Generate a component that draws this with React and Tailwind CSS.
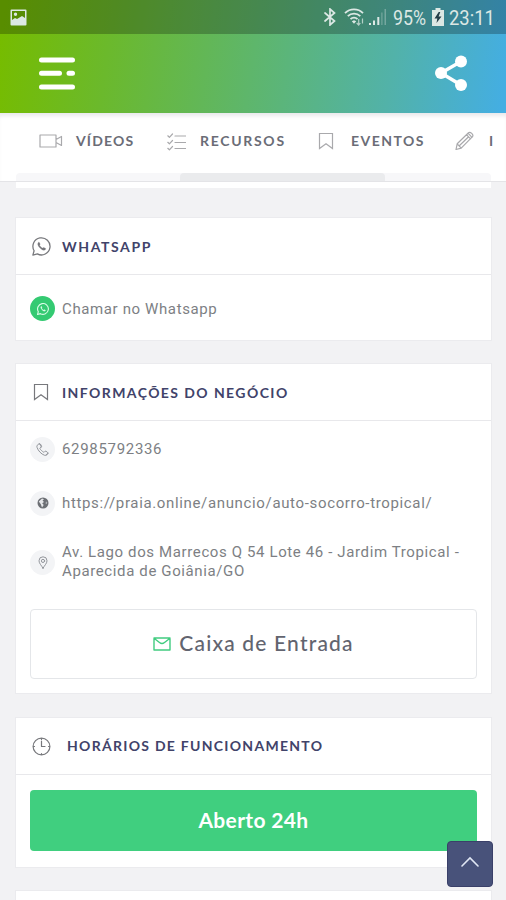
import React from "react";

const head = "font-[Lato,sans-serif] font-bold text-[14px] leading-5 whitespace-nowrap text-[#41436a]";
const tab = "font-[Lato,sans-serif] font-bold text-[14px] leading-5 -mt-[2px] whitespace-nowrap text-[#6b6d77] shrink-0";
const body = "font-[Roboto,sans-serif] text-[15px] whitespace-nowrap text-[#7d7f84]";

function Icon({ w, h, className = "", sw = 1.2, children }) {
  return (
    <svg width={w} height={h} viewBox={`0 0 ${w} ${h}`} className={`shrink-0 ${className}`} fill="none" stroke="currentColor" strokeWidth={sw} strokeLinejoin="round" strokeLinecap="round">
      {children}
    </svg>
  );
}

function WhatsApp({ size, sw, className }) {
  return (
    <svg width={size} height={size} viewBox="0 0 18 18" className={`shrink-0 ${className}`} fill="none" stroke="currentColor" strokeWidth={sw} strokeLinejoin="round" strokeLinecap="round">
      <path d="M.8 17.2 2 13A8.1 8.1 0 1 1 5.1 16Z" />
      <path d="M6.1 5.1C4.8 6 5.4 8 7.3 10.1c2.2 2.3 4.6 3.2 5.5 1.7.4-.7.2-1-.5-1.3l-1.2-.6c-.5-.2-.7.7-1.2.6C8.800 10.100 7.600 8.900 7.200 7.900c-.1-.4.7-.6.500-1.200l-.6-1.300c-.2-.4-.6-.5-1-.3Z" fill="currentColor" strokeWidth=".2" />
    </svg>
  );
}

function Bookmark({ className }) {
  return (
    <Icon w={16} h={18} className={className}>
      <path d="M1.500 1.500h13v15L8 11.800 1.500 16.500Z" strokeLinejoin="miter" />
    </Icon>
  );
}

function Round({ children }) {
  return <div className="flex size-[25px] shrink-0 items-center justify-center rounded-full bg-[#f3f4f6] text-[#93969c]">{children}</div>;
}

function Card({ className = "", title, children }) {
  return (
    <section className={`mx-[15px] w-[477px] shrink-0 border border-[#ebebee] bg-white ${className}`}>
      <div className="flex h-[57px] items-center border-b border-[#e8e8eb] pl-[15px]">{title}</div>
      {children}
    </section>
  );
}

function StatusBar() {
  return (
    <div className="flex h-[34px] items-center bg-black/25 text-[#dce8e4]">
      <svg width="17" height="17" viewBox="0 0 17 17" className="ml-[10px] shrink-0">
        <path fillRule="evenodd" fill="currentColor" d="M1.500.5h14a1 1 0 0 1 1 1v14a1 1 0 0 1-1 1h-14a1 1 0 0 1-1-1v-14a1 1 0 0 1 1-1ZM2 2v9l3-2 2 1 5-3 3 2V2ZM5.500 3.500a1.700 1.700 0 1 1 0 3.400 1.700 1.700 0 0 1 0-3.400Z" />
      </svg>
      <Icon w={12} h={18} sw={1.700} className="ml-[297px]">
        <path d="m1 5 9.500 8L6 17V1l4.500 4L1 13" strokeLinejoin="miter" />
      </Icon>
      <svg width="22" height="18" viewBox="0 0 22 18" className="ml-[8px] shrink-0" fill="none" stroke="currentColor" strokeWidth="1.800">
        <path d="M1 5.200c5-5 13-5 18 0M3.800 8.200c3.500-3.400 9-3.400 12.500 0M6.500 11.200c2-2 5-2 7 0" />
        <path d="m7.800 13.300 2.200-1 2.200 1L10 15.700Z" fill="currentColor" stroke="none" />
        <path d="M14.700 17v-6M12.700 15l2 2 1.600-2M18.500 10.500v5" strokeWidth="1.200" opacity=".75" />
      </svg>
      <svg width="19" height="18" viewBox="0 0 19 18" className="ml-[2px] shrink-0" fill="currentColor">
        <path d="M1 15h2v2H1ZM5 12.500h2V17H5ZM9.300 9h2v8h-2Z" />
        <path d="M13.300 4.500h1.200V17h-1.200ZM16.500 1H18v16h-1.500Z" opacity=".35" />
      </svg>
      <span className="ml-[6px] mt-[2px] inline-block w-[34px] origin-left scale-x-[.89] whitespace-nowrap font-[Roboto,sans-serif] text-[20px] leading-6">95%</span>
      <svg width="12" height="18" viewBox="0 0 12 18" className="ml-[5px] shrink-0">
        <path d="M3.500 0h5v2H12v16H0V2h3.500Z" fill="currentColor" />
        <path d="M6.700 4 2.500 10.500h2.800L4.500 15l5-6.500H6.600L8.300 4Z" fill="#243e48" />
      </svg>
      <span className="ml-[5px] mt-[2px] inline-block w-[46px] origin-left scale-x-[.92] whitespace-nowrap font-[Roboto,sans-serif] text-[20px] leading-6">23:11</span>
    </div>
  );
}

export default function App() {
  return (
    <div className="relative flex h-[900px] w-[506px] flex-col overflow-hidden bg-[#f2f2f4]">
      <header className="h-[113px] shrink-0 bg-[linear-gradient(98deg,#76bc00_1%,#6bb92c_22%,#5eb66b_50%,#52b2a9_77%,#44aee2_99%)]">
        <StatusBar />
        <div className="flex h-[79px] items-center justify-between pl-[38px] pr-[38px] text-white">
          <Icon w={38} h={36} sw={5} className="-mt-px">
            <path d="M3.500 5h31M3.500 18.300h18M31 18.300h3.500M3.500 32h31" />
          </Icon>
          <svg width="34" height="36" viewBox="0 0 34 36" fill="currentColor" className="-mt-[2px]">
            <path d="M27 6.500 7 18l20 12" fill="none" stroke="currentColor" strokeWidth="3.500" />
            <circle cx="27" cy="6.500" r="6" />
            <circle cx="7" cy="18" r="6" />
            <circle cx="27" cy="30" r="6" />
          </svg>
        </div>
      </header>

      <nav className="flex h-[69px] shrink-0 flex-col border-b border-[#e4e4e7] bg-white shadow-[inset_0_5px_4px_-2px_#e9e9eb]">
        <div className="flex h-[58px] w-[493px] items-center overflow-hidden pl-[39px] text-[#a9a9ac]">
          <Icon w={24} h={14} className="-mt-[3px]">
            <path d="M1 1h16v12H1ZM17 5.500l5.500-3v9L17 8.500" />
          </Icon>
          <span className={`${tab} ml-[13px] w-[91px] tracking-[1.150px]`}>VÍDEOS</span>
          <Icon w={19} h={18} className="-mt-px">
            <path d="M8 3h10.500M8 9.500h10.500M8 15.500h10.500M.8 2.800l1.600 1.500L5.500 1M.8 9.300l1.600 1.500 3.100-3.300M.8 15.300l1.600 1.500 3.100-3.300" />
          </Icon>
          <span className={`${tab} ml-[14px] w-[118px] tracking-[1.700px]`}>RECURSOS</span>
          <Bookmark className="-mt-[3px]" />
          <span className={`${tab} ml-[17px] w-[104px] tracking-[1.450px]`}>EVENTOS</span>
          <Icon w={19} h={20} className="-mt-[3px]">
            <path d="m1 18.500 1.200-5.700L13.500 1.700c1.700-1.500 5.500 2 4 4L6.200 17.200ZM2.200 12.800l4 4.400M11.500 3.700l4 4.200M13 2.200l4 4.200M4.300 14.800 13.600 5.800" />
          </Icon>
          <span className={`${tab} ml-[15px]`}>I</span>
        </div>
        <div className="mx-4 mt-auto flex h-2 w-[475px] rounded-t bg-[#f7f7f9]">
          <div className="ml-[164px] h-full w-[205px] rounded-t bg-[#eaebed]" />
        </div>
      </nav>
      <div className="mx-4 h-[6px] w-[475px] shrink-0 bg-white" />

      <Card
        className="mt-[29px] h-[124px]"
        title={
          <>
            <WhatsApp size={19} sw={1.200} className="ml-px mt-px text-[#77787c]" />
            <h2 className={`${head} ml-[11px] mt-[2px] tracking-[1.600px]`}>WHATSAPP</h2>
          </>
        }
      >
        <div className="flex h-[67px] items-center pl-[14px]">
          <div className="flex size-[25px] items-center justify-center rounded-full bg-[#34ca72]">
            <WhatsApp size={12} sw={1.700} className="text-[#d9fbe6]" />
          </div>
          <span className={`${body} ml-[7px] mt-px tracking-[.62px]`}>Chamar no Whatsapp</span>
        </div>
      </Card>

      <Card
        className="mt-[22px] h-[331px]"
        title={
          <>
            <Bookmark className="ml-[2px] text-[#77787c]" />
            <h2 className={`${head} ml-[13px] mt-px tracking-[1.420px]`}>INFORMAÇÕES DO NEGÓCIO</h2>
          </>
        }
      >
        <div className="flex flex-col pl-[14px]">
          <div className="flex h-[57px] items-center">
            <Round>
              <Icon w={13} h={13} sw={1}>
                <path d="M3.300.8C1.300 1.500.5 2.800 1 4.300c1.200 3.700 4.300 6.700 7.300 7.900 1.500.6 3-.3 3.700-1.600.4-.9-1.900-2.700-2.800-2.400-.7.2-.8 1.300-1.500 1C6 8.200 4.500 6.800 3.900 5.500c-.4-.8 1-.9 1.200-1.700C5.300 3 4.100.7 3.300.8ZM4.500 1.200l1.100 2.300-.8 1.200M12 10.300l-2 1.500" />
              </Icon>
            </Round>
            <span className={`${body} ml-[7px] tracking-[.68px]`}>62985792336</span>
          </div>
          <div className="flex h-[50px] items-center">
            <Round>
              <svg width="12" height="12" viewBox="0 0 12 12">
                <circle cx="6" cy="6" r="5.500" fill="#6c6f74" />
                <path d="M1.800 4.500 5 1.500l2 .7-1.500 1.300L7 5 5.200 6.300 6.700 8 5 10.500 3.800 7.300Z" fill="#e5e6e9" />
                <path d="m9 4.500 1.300.7-.6 2-1.200-.8Z" fill="#aeb0b5" />
              </svg>
            </Round>
            <span className={`${body} ml-[7px] tracking-[.65px]`}>https://praia.online/anuncio/auto-socorro-tropical/</span>
          </div>
          <div className="flex h-[68px] items-center">
            <Round>
              <Icon w={10} h={13} sw={1}>
                <path d="M5 12.300C3.800 9.700 1 7.500 1 4.800a4 4 0 0 1 8 0c0 2.700-2.800 4.900-4 7.500Z" />
                <circle cx="5" cy="4.900" r="1.600" />
              </Icon>
            </Round>
            <p className={`${body} ml-[7px] leading-[19px] tracking-[.62px]`}>
              Av. Lago dos Marrecos Q 54 Lote 46 - Jardim Tropical -<br />
              Aparecida de Goiânia/GO
            </p>
          </div>
        </div>
        <button className="ml-[14px] mt-[13px] flex h-[70px] w-[447px] items-center justify-center rounded-sm border border-[#e4e6e9] bg-white">
          <Icon w={18} h={14} className="text-[#41cc80]" sw={1.400}>
            <path d="M1 1h16v12H1ZM1 1.200l5.500 4.300q2.500 2 5 0L17 1.200" />
          </Icon>
          <span className="-mt-[2px] ml-[8px] whitespace-nowrap font-[Lato,sans-serif] text-[21px] leading-7 font-medium tracking-[1.180px] text-[#62646f]">Caixa de Entrada</span>
        </button>
      </Card>

      <Card
        className="mt-[23px] h-[151px]"
        title={
          <>
            <Icon w={19} h={19} className="ml-px text-[#77787c]">
              <circle cx="9.500" cy="9.500" r="8.400" />
              <path d="M9.500 4.200v5.300H13M9.500 1.500v1M9.500 16.500v1M1.500 9.500h1M16.500 9.500h1" />
            </Icon>
            <h2 className={`${head} ml-[16px] tracking-[1.280px]`}>HORÁRIOS DE FUNCIONAMENTO</h2>
          </>
        }
      >
        <button className="ml-[14px] mt-[15px] flex h-[61px] w-[447px] items-center justify-center rounded bg-[#40cf7f]">
          <span className="-mt-[2px] whitespace-nowrap font-[Lato,sans-serif] text-[21px] leading-7 font-bold tracking-[.35px] text-white">Aberto 24h</span>
        </button>
      </Card>

      <div className="mx-[15px] mt-[22px] h-[40px] w-[477px] shrink-0 border border-[#ebebee] bg-white" />

      <button className="absolute left-[447px] top-[841px] flex h-[46px] w-[46px] items-center justify-center rounded border border-[#3a4069] bg-[#48527a]">
        <Icon w={18} h={12} sw={1.600} className="-mt-[5px] text-[#e1e7f4]">
          <path d="m1 10 8-8 8 8" strokeLinejoin="miter" />
        </Icon>
      </button>
    </div>
  );
}
